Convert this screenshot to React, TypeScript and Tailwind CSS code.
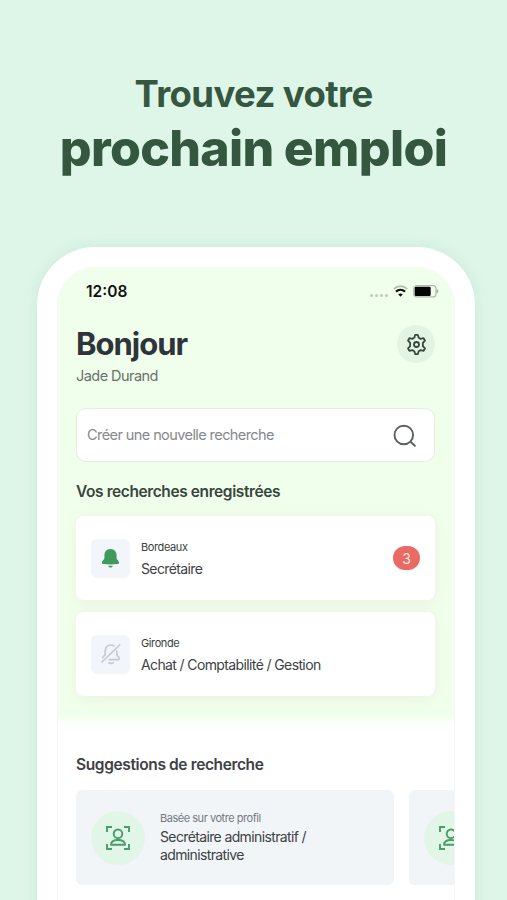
import React from "react";

interface SavedSearch {
  city: string;
  job: string;
  alert: boolean;
  count?: number;
}

const savedSearches: SavedSearch[] = [
  { city: "Bordeaux", job: "Secrétaire", alert: true, count: 3 },
  { city: "Gironde", job: "Achat / Comptabilité / Gestion", alert: false },
];

const WifiIcon = () => (
  <svg width="15" height="12" viewBox="0 0 15 12" fill="none">
    <path d="M.8 4C4.6 .2 10.4 .2 14.2 4" stroke="#b5bab0" strokeWidth="1.7" />
    <path d="M3 6.7C5.7 4.2 9.3 4.2 12 6.7" stroke="#111" strokeWidth="2.3" />
    <path d="M7.5 11.8 5.2 9.3C6.5 8.1 8.5 8.1 9.8 9.3Z" fill="#111" />
  </svg>
);

const BatteryIcon = () => (
  <svg width="26" height="13" viewBox="0 0 26 13" fill="none">
    <rect x=".7" y=".7" width="22.3" height="11.2" rx="3" stroke="#b3b8b0" strokeWidth="1.2" />
    <rect x="1.7" y="1.7" width="16" height="9.2" rx="1.2" fill="#050505" />
    <path d="M23.6 4C26 4.6 26 8 23.6 8.6Z" fill="#a9aea6" />
  </svg>
);

const GearIcon = () => (
  <svg width="23" height="23" viewBox="0 0 24 24" fill="none" stroke="#36493f" strokeWidth="1.9" strokeLinejoin="round">
    <path d="M10.6 2h2.8l.9 3 2 1.15 3.1-.7 1.4 2.4L18.65 10.2v3.6l2.15 2.35-1.4 2.4-3.1-.7-2 1.15-.9 3h-2.8l-.9-3-2-1.15-3.1.7-1.4-2.4L5.35 13.8v-3.6L3.2 7.85l1.4-2.4 3.1.7 2-1.15z" />
    <circle cx="12" cy="12" r="2.6" />
  </svg>
);

const SearchIcon = () => (
  <svg width="24" height="24" viewBox="0 0 24 24" fill="none" stroke="#5c6064" strokeWidth="1.9" strokeLinecap="round">
    <circle cx="10.8" cy="11" r="9.3" />
    <path d="m17.5 17.8 4.4 4" />
  </svg>
);

const BellIcon = () => (
  <svg width="19" height="20" viewBox="0 0 20 21" fill="#3f9a5b">
    <path d="M10 1C6 1 3.6 4 3.6 7.6v2.8C3.6 12.6 1 13.2 1 15.2c0 1.1.6 1.6 1.8 1.7 4.8.5 9.6.5 14.4 0 1.2-.1 1.8-.6 1.8-1.7 0-2-2.6-2.6-2.6-4.8V7.6C16.4 4 14 1 10 1Z" />
    <path d="M7.6 18.6h4.8c-.3 1.200-1.200 1.900-2.400 1.900s-2.100-.7-2.400-1.900Z" />
  </svg>
);

const BellOffIcon = () => (
  <svg width="20" height="22" viewBox="0 0 20 22" fill="none" stroke="#c6cad8" strokeWidth="1.7" strokeLinecap="round" strokeLinejoin="round">
    <path d="M1 19 18.6 2" />
    <path d="M4.2 11.4V8C4.2 4.4 6.4 2 9.8 2c1.2 0 2.2.2 3.1.8" />
    <path d="M4.2 11.4c0 1.2-2 1.8-2.4 3.2" />
    <path d="M15.8 8.2v3c0 1.9 2.3 2.6 2.5 4.2.1.9-.5 1.3-1.3 1.3H8.4" />
    <path d="M8 19.8c1.300.8 2.900.8 4.200-.1" />
  </svg>
);

const ProfileScanIcon = () => (
  <svg width="24" height="24" viewBox="0 0 24 24" fill="none" stroke="#4a9c6b" strokeWidth="1.9">
    <path d="M1 6V1h5M18 1h5v5M23 18v5h-5M6 23H1v-5" />
    <circle cx="12" cy="7.8" r="4.3" />
    <path d="M5 18.8c0-3.2 3-4.8 7-4.8s7 1.6 7 4.8H5Z" strokeLinejoin="round" />
  </svg>
);

const SavedSearchCard = ({ city, job, alert, count }: SavedSearch) => (
  <div className="flex h-[84px] items-center rounded-lg bg-white pr-[15px] pl-[15px] shadow-[0_2px_14px_rgba(225,205,205,0.3)]">
    <div className="flex size-[39px] shrink-0 items-center justify-center rounded-md bg-[#f2f5f9]">
      {alert ? <BellIcon /> : <BellOffIcon />}
    </div>
    <div className="ml-[11px] flex-1">
      <p className="text-[11px] leading-5 tracking-[-0.4px] text-[#39423e]">{city}</p>
      <p className="mt-px text-[14px] leading-[21px] tracking-[-0.62px] text-[#3d4145]">{job}</p>
    </div>
    {count && (
      <span className="flex h-6 w-[27px] items-center justify-center rounded-full bg-[#e96b63] text-[14px] text-[#ffe9e5]">
        {count}
      </span>
    )}
  </div>
);

const SuggestionCard = ({ children }: { children?: React.ReactNode }) => (
  <div className="flex h-[95px] w-[318px] shrink-0 items-center rounded-md bg-[#f1f5f8] pl-[15px]">
    <div className="flex size-[54px] shrink-0 items-center justify-center rounded-full bg-[#e1f6e7]">
      <ProfileScanIcon />
    </div>
    {children}
  </div>
);

export default function App() {
  return (
    <div className="flex h-[900px] w-full flex-col overflow-hidden bg-[#ddf6e8] font-['Inter',sans-serif]">
      <header className="h-[247px] shrink-0 pt-[70px] text-center text-[#355740]">
        <p className="text-[36.5px] leading-[48px] font-[650] tracking-[-0.6px]">Trouvez votre</p>
        <h1 className="text-[50px] leading-[60px] font-extrabold tracking-[-0.7px]">prochain emploi</h1>
      </header>

      <main className="mr-8 ml-[37px] h-[680px] shrink-0 rounded-t-[58px] bg-white px-5 pt-5 shadow-[0_0_16px_rgba(90,150,120,0.12)]">
        <div className="h-full overflow-hidden rounded-t-[38px] border-x border-[#f5f7f7]">
          <section className="h-[449px] bg-[#f0ffeb] pr-[19px] pl-[18px] shadow-[0_0_8px_4px_#f0ffeb]">
            <div className="flex h-12 items-center justify-between pl-[10px]">
              <span className="mt-px text-[15.5px] font-semibold text-[#111]">12:08</span>
              <div className="-mr-1 flex items-center">
                <div className="mt-2 mr-[5px] flex gap-[2px]">
                  {[0, 1, 2, 3].map((dot) => (
                    <i key={dot} className="size-[3px] rounded-full bg-[#c3cabd]" />
                  ))}
                </div>
                <WifiIcon />
                <span className="ml-[5px]"><BatteryIcon /></span>
              </div>
            </div>

            <div className="flex h-[93px] items-start justify-between pt-[9px]">
              <div>
                <h2 className="text-[31px] leading-10 font-bold tracking-[-1px] text-[#2f343b]">Bonjour</h2>
                <p className="mt-[2px] text-[14.5px] leading-5 tracking-[-0.55px] text-[#68736b]">Jade Durand</p>
              </div>
              <div className="mt-px flex size-[38px] items-center justify-center rounded-full bg-[#e3f5e2]">
                <GearIcon />
              </div>
            </div>

            <div className="flex h-[54px] items-center justify-between rounded-[10px] border border-[#e2efdc] bg-white pr-[17px] pl-[10px]">
              <span className="text-[14.5px] tracking-[-0.58px] text-[#85898c]">Créer une nouvelle recherche</span>
              <span className="mt-[2px]"><SearchIcon /></span>
            </div>

            <h3 className="mt-[18px] text-[15.5px] leading-6 font-semibold tracking-[-0.4px] text-[#3a4541]">
              Vos recherches enregistrées
            </h3>
            <div className="mt-3 flex flex-col gap-3">
              {savedSearches.map((search) => (
                <SavedSearchCard key={search.city} {...search} />
              ))}
            </div>
          </section>

          <section className="pt-[37px] pl-[18px]">
            <h3 className="text-[15.5px] leading-6 font-semibold tracking-[-0.37px] text-[#3d4145]">
              Suggestions de recherche
            </h3>
            <div className="mt-[13px] flex gap-[15px]">
              <SuggestionCard>
                <div className="-mt-[3px] ml-[15px]">
                  <p className="text-[11px] leading-[19px] tracking-[-0.47px] text-[#74797f]">Basée sur votre profil</p>
                  <p className="text-[14px] leading-[17.5px] tracking-[-0.63px] text-[#3d4145]">
                    Secrétaire administratif /<br />administrative
                  </p>
                </div>
              </SuggestionCard>
              <SuggestionCard />
            </div>
          </section>
        </div>
      </main>
    </div>
  );
}
